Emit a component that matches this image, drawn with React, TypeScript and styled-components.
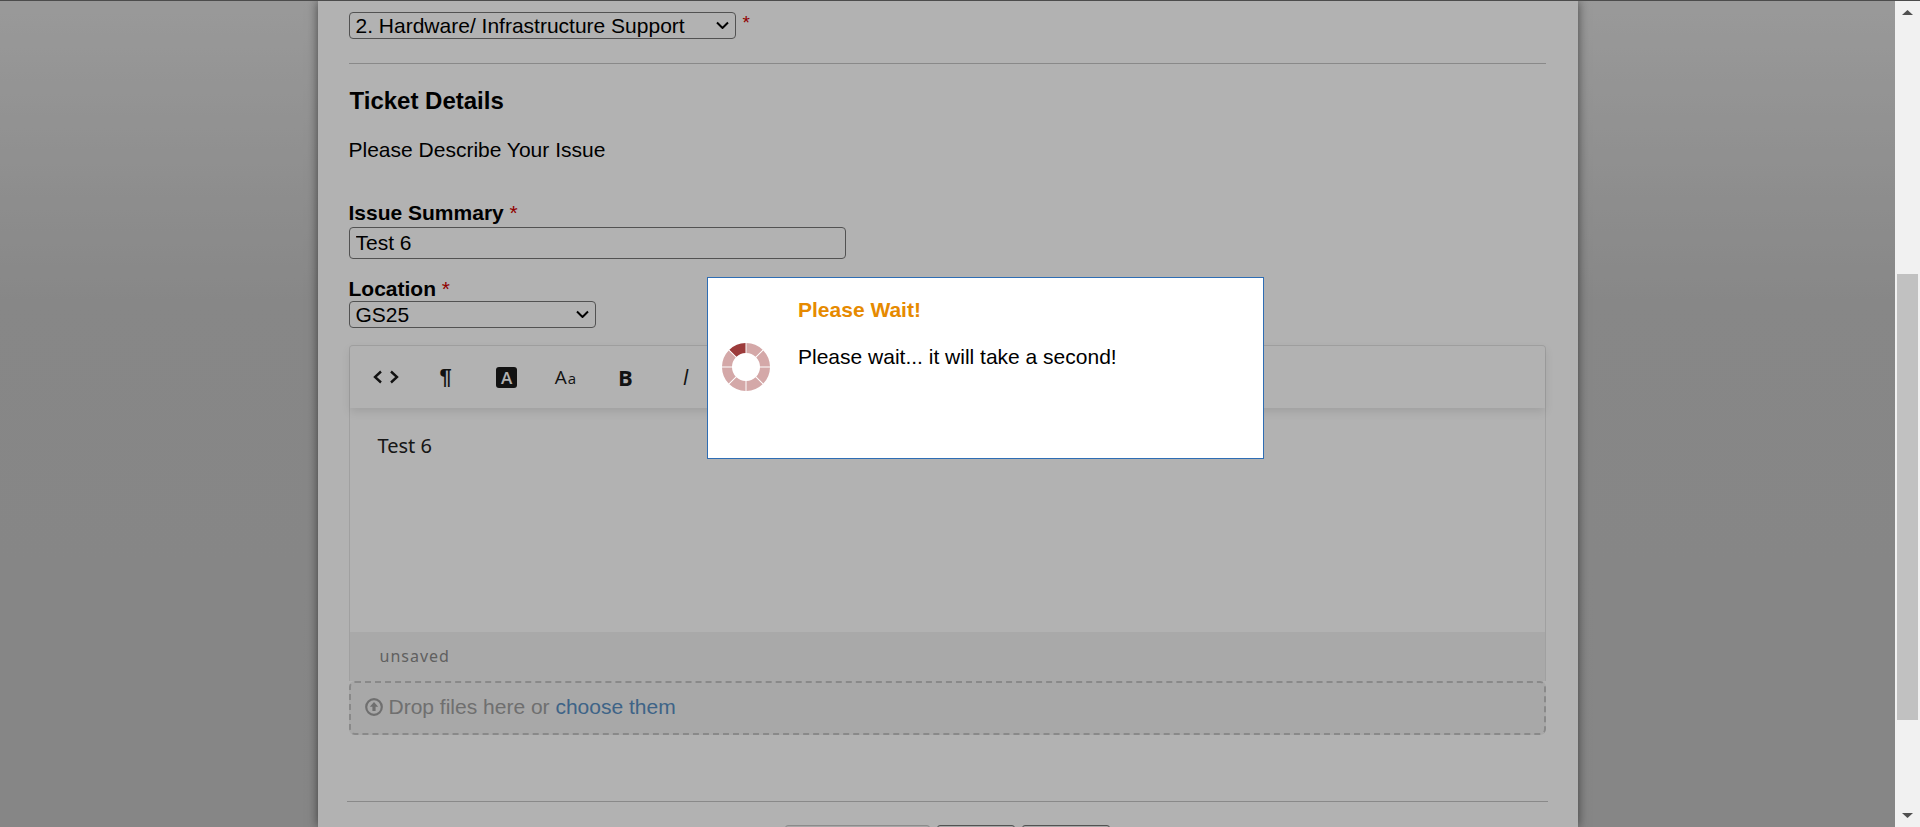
import * as React from "react";
import styled, { createGlobalStyle } from "styled-components";

const GlobalStyle = createGlobalStyle`
  html, body {
    margin: 0;
    height: 100%;
    overflow: hidden;
  }
  body {
    font-family: "Liberation Sans", Arial, sans-serif;
    color: #000;
  }
`;

const Shell = styled.div`
  height: 100vh;
  display: flex;
  flex-direction: column;
`;

const TopEdge = styled.div`
  height: 1px;
  flex: none;
  background: #4c4c4c;
`;

const Frame = styled.div`
  flex: 1;
  min-height: 0;
  display: flex;
`;

const Viewport = styled.div`
  position: relative;
  flex: 1;
  min-width: 0;
  overflow: hidden;
  background: linear-gradient(#dcdcdc 0, #c2c2c2 300px, #c0c0c0 100%);
`;

const Card = styled.div`
  width: 1260px;
  height: 100%;
  box-sizing: border-box;
  margin: 0 auto;
  padding: 11px 32px 0 31px;
  background: #fff;
  box-shadow: 0 0 10px rgba(0, 0, 0, 0.55);
`;

const Row = styled.div`
  display: flex;
  align-items: flex-start;
`;

const SelectBox = styled.div<{ $width: number; $height: number }>`
  position: relative;
  width: ${(p) => p.$width}px;
  height: ${(p) => p.$height}px;
`;

const Select = styled.select`
  display: block;
  width: 100%;
  height: 100%;
  box-sizing: border-box;
  padding: 0 0 0 6px;
  appearance: none;
  font: 21px "Liberation Sans", Arial, sans-serif;
  color: #000;
  background: #fff;
  border: 1px solid #767676;
  border-radius: 4px;
`;

const SelectArrow = styled.svg`
  position: absolute;
  right: 7px;
  top: 9px;
  width: 13px;
  height: 8px;
  fill: none;
  stroke: #000;
  stroke-width: 2;
  pointer-events: none;
`;

const Star = styled.span`
  color: #d00000;
  font-weight: 400;
`;

const SelectStar = styled(Star)`
  margin-left: 7px;
  font-size: 19px;
  line-height: 22px;
`;

const Rule = styled.hr<{ $top: number; $bottom: number; $outset?: number }>`
  height: 1px;
  border: 0;
  background: #c4c4c4;
  margin: ${(p) => p.$top}px ${(p) => -(p.$outset ?? 0)}px ${(p) => p.$bottom}px ${(p) => -(p.$outset ?? 0)}px;
`;

const Heading = styled.h3`
  margin: 0 0 0 1px;
  font-size: 24px;
  line-height: 26px;
  font-weight: 700;
`;

const Intro = styled.p`
  margin: 24px 0 0;
  font-size: 21px;
  line-height: 24px;
`;

const Label = styled.label<{ $top: number; $gap: number }>`
  display: block;
  margin-top: ${(p) => p.$top}px;
  padding-bottom: ${(p) => p.$gap}px;
  font-size: 21px;
  line-height: 22px;
  font-weight: 700;
`;

const TextInput = styled.input`
  display: block;
  width: 497px;
  height: 32px;
  box-sizing: border-box;
  padding: 0 6px;
  font: 21px "Liberation Sans", Arial, sans-serif;
  color: #000;
  background: #fff;
  border: 1px solid #767676;
  border-radius: 4px;
`;

const Editor = styled.div`
  margin-top: 17px;
  border: 1px solid #e6e6e6;
  border-bottom: 0;
  border-radius: 4px 4px 0 0;
`;

const Toolbar = styled.div`
  height: 62px;
  box-sizing: border-box;
  display: flex;
  align-items: center;
  padding: 0 0 0 6px;
  box-shadow: 0 4px 9px rgba(0, 0, 0, 0.1);
`;

const ToolButton = styled.span`
  width: 60px;
  height: 30px;
  display: flex;
  align-items: center;
  justify-content: center;
  font-family: "Open Sans", "Noto Sans", sans-serif;
  color: #1b1b1b;
`;

const ToolGlyph = styled.span<{ $size: number; $bold?: boolean; $italic?: boolean }>`
  font-size: ${(p) => p.$size}px;
  font-weight: ${(p) => (p.$bold ? 700 : 500)};
  font-style: ${(p) => (p.$italic ? "italic" : "normal")};
  line-height: 1;
`;

const Pilcrow = styled(ToolGlyph)`
  font-family: "Liberation Sans", Arial, sans-serif;
`;

const SmallA = styled.span`
  font-size: 15px;
  font-weight: 400;
  margin-left: 1px;
`;

const InvertedA = styled.span`
  width: 21px;
  height: 21px;
  margin-left: 2px;
  display: flex;
  align-items: center;
  justify-content: center;
  border-radius: 3px;
  background: #1b1b1b;
  color: #fff;
  font-size: 17px;
  font-weight: 600;
`;

const EditorBody = styled.div`
  height: 224px;
  box-sizing: border-box;
  padding: 25px 28px;
  font-family: "Noto Sans", "Open Sans", sans-serif;
  font-size: 20px;
  line-height: 26px;
  color: #222;
`;

const StatusBar = styled.div`
  height: 49px;
  box-sizing: border-box;
  padding: 14px 30px 0;
  background: #f3f3f3;
  font-family: "Noto Sans", "Open Sans", sans-serif;
  font-size: 16px;
  letter-spacing: 1px;
  line-height: 20px;
  color: #8a8a8a;
`;

const DropZone = styled.div`
  height: 54px;
  box-sizing: border-box;
  display: flex;
  align-items: center;
  gap: 6px;
  padding: 0 0 2px 14px;
  border: 2px dashed #c4c4c4;
  border-radius: 6px;
  background: #f1f1f1;
  font-size: 21px;
  color: #a0a0a0;
`;

const ChooseLink = styled.a`
  color: #598fc2;
`;

const ButtonRow = styled.div`
  display: flex;
  justify-content: center;
  gap: 7px;
  margin-left: 1px;
`;

const FormButton = styled.button<{ $width: number; $muted?: boolean }>`
  width: ${(p) => p.$width}px;
  height: 32px;
  flex: none;
  background: #efefef;
  border: 1px solid ${(p) => (p.$muted ? "#c8c8c8" : "#767676")};
  border-radius: 3px;
`;

const Dim = styled.div`
  position: absolute;
  inset: 0;
  background: rgba(0, 0, 0, 0.3);
`;

const Dialog = styled.div`
  position: absolute;
  left: 707px;
  top: 276px;
  width: 557px;
  height: 182px;
  box-sizing: border-box;
  display: flex;
  background: #fff;
  border: 1px solid #2e6db4;
`;

const SpinnerSlot = styled.div`
  width: 90px;
  flex: none;
  padding: 65px 0 0 14px;
  box-sizing: border-box;
`;

const DialogText = styled.div`
  padding-top: 20px;
`;

const DialogTitle = styled.h4`
  margin: 0;
  font-size: 21px;
  line-height: 24px;
  font-weight: 700;
  color: #e68a00;
`;

const DialogMessage = styled.p`
  margin: 23px 0 0;
  font-size: 21px;
  line-height: 24px;
`;

const ScrollBar = styled.div`
  width: 25px;
  flex: none;
  position: relative;
  background: #f1f1f1;
`;

const Thumb = styled.div`
  position: absolute;
  left: 2px;
  right: 2px;
  top: 273px;
  height: 446px;
  background: #c1c1c1;
`;

const ScrollArrow = styled.svg<{ $end: "top" | "bottom" }>`
  position: absolute;
  left: 7px;
  ${(p) => p.$end}: 9px;
  width: 11px;
  height: 5px;
  fill: #505050;
`;

// 8 ring slices, the one before 12 o'clock is the active one
const ringSlice = (index: number) => {
  const cx = 24;
  const cy = 24;
  const outer = 24;
  const inner = 14;
  const gap = 1;
  const from = ((index * 45 - 90) * Math.PI) / 180;
  const to = (((index + 1) * 45 - 90) * Math.PI) / 180;
  const point = (r: number, a: number, side: number) => {
    const shift = (gap / 2) * side;
    return `${(cx + r * Math.cos(a) - shift * Math.sin(a)).toFixed(2)} ${(cy + r * Math.sin(a) + shift * Math.cos(a)).toFixed(2)}`;
  };
  return `M${point(outer, from, 1)} A${outer} ${outer} 0 0 1 ${point(outer, to, -1)} L${point(inner, to, -1)} A${inner} ${inner} 0 0 0 ${point(inner, from, 1)} Z`;
};

const Spinner = () => (
  <svg width="48" height="48" viewBox="0 0 48 48">
    {[0, 1, 2, 3, 4, 5, 6, 7].map((i) => (
      <path key={i} d={ringSlice(i)} fill={i === 7 ? "#9c3b3b" : "#d4a8a8"} />
    ))}
  </svg>
);

const CodeIcon = () => (
  <svg width="26" height="14" viewBox="0 0 26 14" fill="none" stroke="#1b1b1b" strokeWidth="2.4">
    <path d="M8 1.5 2 7l6 5.5" />
    <path d="M18 1.5 24 7l-6 5.5" />
  </svg>
);

const UploadIcon = () => (
  <svg width="18" height="18" viewBox="0 0 18 18">
    <circle cx="9" cy="9" r="7.8" fill="none" stroke="#a0a0a0" strokeWidth="2.2" />
    <path d="M9 4 13.2 8.8h-2.6V13H7.4V8.8H4.8z" fill="#a0a0a0" />
  </svg>
);

const Chevron = () => (
  <SelectArrow viewBox="0 0 13 8">
    <path d="M1 1.5 6.5 7 12 1.5" />
  </SelectArrow>
);

const App: React.FC = () => (
  <Shell>
    <GlobalStyle />
    <TopEdge />
    <Frame>
      <Viewport>
        <Card>
          <Row>
            <SelectBox $width={387} $height={27}>
              <Select defaultValue="hw">
                <option value="hw">2. Hardware/ Infrastructure Support</option>
              </Select>
              <Chevron />
            </SelectBox>
            <SelectStar>*</SelectStar>
          </Row>
          <Rule $top={24} $bottom={24} />
          <Heading>Ticket Details</Heading>
          <Intro>Please Describe Your Issue</Intro>
          <Label $top={40} $gap={3}>
            Issue Summary <Star>*</Star>
          </Label>
          <TextInput defaultValue="Test 6" />
          <Label $top={19} $gap={1}>
            Location <Star>*</Star>
          </Label>
          <SelectBox $width={247} $height={27}>
            <Select defaultValue="gs25">
              <option value="gs25">GS25</option>
            </Select>
            <Chevron />
          </SelectBox>
          <Editor>
            <Toolbar>
              <ToolButton>
                <CodeIcon />
              </ToolButton>
              <ToolButton>
                <Pilcrow $size={22} $bold>¶</Pilcrow>
              </ToolButton>
              <ToolButton>
                <InvertedA>A</InvertedA>
              </ToolButton>
              <ToolButton>
                <ToolGlyph $size={19}>
                  A<SmallA>a</SmallA>
                </ToolGlyph>
              </ToolButton>
              <ToolButton>
                <ToolGlyph $size={22} $bold>B</ToolGlyph>
              </ToolButton>
              <ToolButton>
                <ToolGlyph $size={21} $italic>I</ToolGlyph>
              </ToolButton>
            </Toolbar>
            <EditorBody>Test 6</EditorBody>
            <StatusBar>unsaved</StatusBar>
          </Editor>
          <DropZone>
            <UploadIcon />
            <span>
              Drop files here or <ChooseLink>choose them</ChooseLink>
            </span>
          </DropZone>
          <Rule $top={66} $bottom={23} $outset={2} />
          <ButtonRow>
            <FormButton $width={145} $muted />
            <FormButton $width={78} />
            <FormButton $width={88} />
          </ButtonRow>
        </Card>
        <Dim />
        <Dialog>
          <SpinnerSlot>
            <Spinner />
          </SpinnerSlot>
          <DialogText>
            <DialogTitle>Please Wait!</DialogTitle>
            <DialogMessage>Please wait... it will take a second!</DialogMessage>
          </DialogText>
        </Dialog>
      </Viewport>
      <ScrollBar>
        <ScrollArrow $end="top" viewBox="0 0 11 5">
          <path d="M5.5 0 11 5H0z" />
        </ScrollArrow>
        <Thumb />
        <ScrollArrow $end="bottom" viewBox="0 0 11 5">
          <path d="M0 0h11L5.5 5z" />
        </ScrollArrow>
      </ScrollBar>
    </Frame>
  </Shell>
);

export default App;
